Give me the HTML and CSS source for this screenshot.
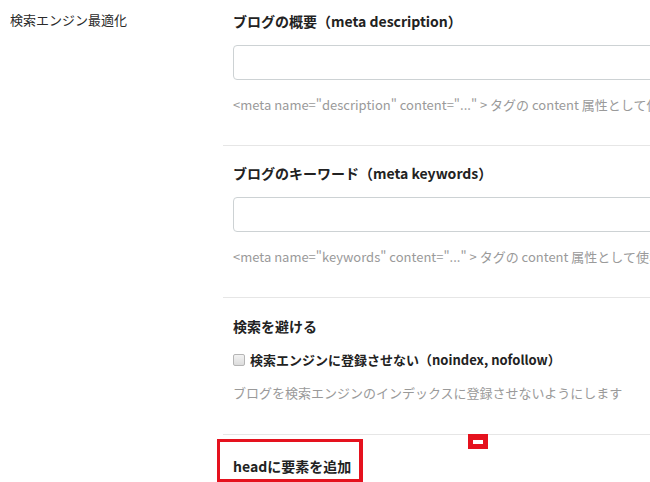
FILE: index.html
```html
<!DOCTYPE html>
<html lang="ja">
<head>
<meta charset="utf-8">
<link rel="stylesheet" href="styles.css">
</head>
<body>
<div class="page">
  <div class="side">検索エンジン最適化</div>
  <div class="main">
    <section class="group first">
      <h3 class="title">ブログの概要（meta description）</h3>
      <div class="input"></div>
      <p class="help">&lt;meta name="description" content="..." &gt; タグの content 属性として使われます</p>
    </section>
    <section class="group">
      <h3 class="title">ブログのキーワード（meta keywords）</h3>
      <div class="input"></div>
      <p class="help">&lt;meta name="keywords" content="..." &gt; タグの content 属性として使われます</p>
    </section>
    <section class="group avoid">
      <h3 class="title">検索を避ける</h3>
      <label class="check"><span class="box"></span>検索エンジンに登録させない（noindex, nofollow）</label>
      <p class="help help-tight">ブログを検索エンジンのインデックスに登録させないようにします</p>
    </section>
    <section class="group last">
      <h3 class="title">headに要素を追加</h3>
      <div class="mark-box"></div>
      <div class="mark-small"><span></span></div>
    </section>
  </div>
</div>
</body>
</html>
```
FILE: styles.css
```css
html, body {
  margin: 0;
  padding: 0;
  background: #fff;
  overflow: hidden;
}
body {
  font-family: "Noto Sans CJK JP", "Open Sans", sans-serif;
  color: #333;
  width: 650px;
  height: 482px;
}
.page {
  display: flex;
  width: 1000px;
}
.side {
  width: 214px;
  flex: none;
  padding: 10px 0 0 10px;
  font-size: 13px;
  line-height: 20px;
  color: #2a2a2a;
}
.main {
  flex: 1;
}
.group {
  border-top: 1px solid #e6e6e6;
  padding: 16px 0 30px 10px;
  margin-left: -1px;
  position: relative;
}
.group.first {
  border-top: none;
  padding-top: 10px;
  padding-bottom: 30px;
}
.group.avoid {
  padding-top: 17px;
  padding-bottom: 31px;
}
.title {
  margin: 0 0 13px;
  font-size: 14px;
  line-height: 22px;
  font-weight: bold;
  color: #222;
}
.input {
  height: 33px;
  border: 1px solid #cdd2d4;
  border-radius: 4px;
  background: #fff;
}
.help {
  margin: 15px 0 0;
  font-size: 13px;
  line-height: 20px;
  color: #9a9a9a;
  white-space: nowrap;
}
.check {
  display: flex;
  align-items: center;
  margin-top: 12px;
  font-size: 13px;
  line-height: 20px;
  font-weight: bold;
  color: #222;
}
.box {
  width: 10px;
  height: 10px;
  border: 1px solid #b5b5b5;
  border-radius: 2px;
  background: linear-gradient(#f2f2f2, #dcdcdc);
  margin: 0 5px 0 0;
}
.help-tight {
  margin-top: 13px;
}
.group.last {
  padding-top: 20px;
}
.mark-box {
  position: absolute;
  left: -6px;
  top: 4px;
  width: 139px;
  height: 37px;
  border: 3px solid #e5121e;
  border-right-width: 4px;
}
.mark-small {
  position: absolute;
  left: 245px;
  top: -1px;
  width: 20px;
  height: 15px;
  background: #e5121e;
  display: flex;
  align-items: center;
  justify-content: center;
}
.mark-small span {
  width: 10px;
  height: 4px;
  background: #fff;
}
```
